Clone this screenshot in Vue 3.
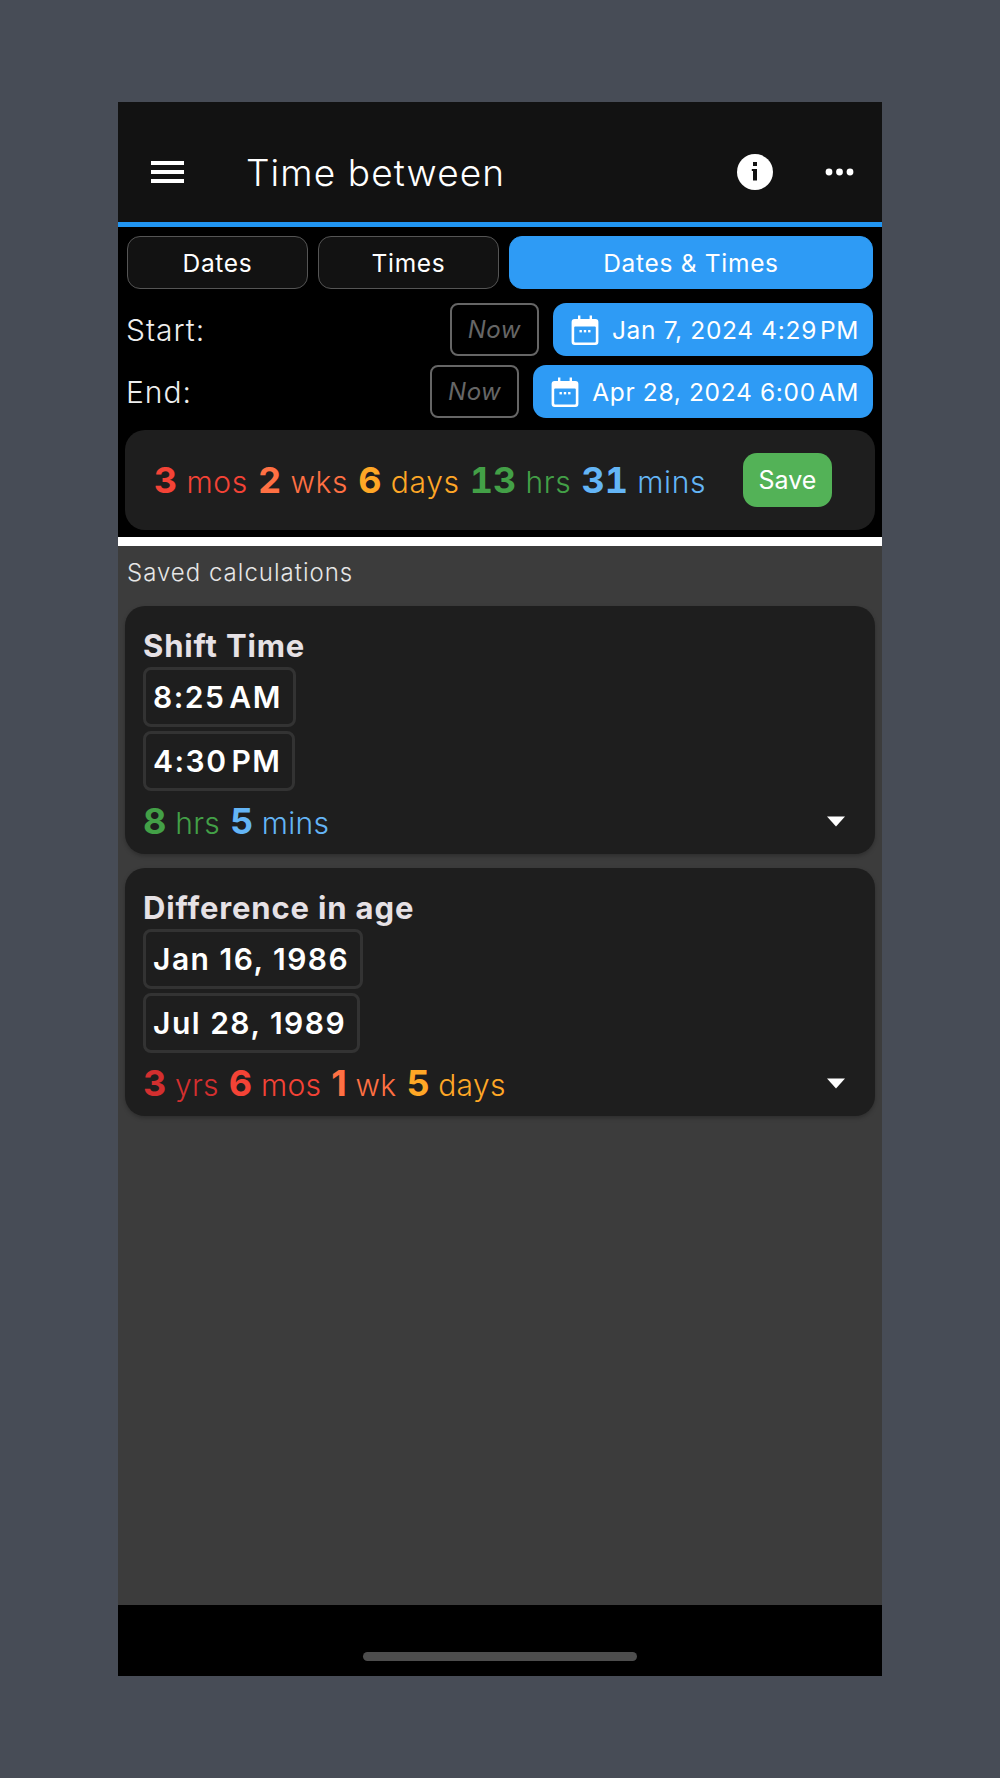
<script setup>
const tabs = [
  { label: 'Dates', wide: false },
  { label: 'Times', wide: false },
  { label: 'Dates & Times', wide: true }
]

const pickers = [
  { label: 'Start:', value: 'Jan 7, 2024 4:29\u200aPM' },
  { label: 'End:', value: 'Apr 28, 2024 6:00\u200aAM' }
]

const result = [
  { n: '3', unit: 'mos', color: '#f44336' },
  { n: '2', unit: 'wks', color: '#ff7043' },
  { n: '6', unit: 'days', color: '#ffa726' },
  { n: '13', unit: 'hrs', color: '#43a047' },
  { n: '31', unit: 'mins', color: '#64b5f6' }
]

const saved = [
  {
    title: 'Shift Time',
    chips: ['8:25\u200aAM', '4:30\u200aPM'],
    parts: [
      { n: '8', unit: 'hrs', color: '#43a047' },
      { n: '5', unit: 'mins', color: '#64b5f6' }
    ]
  },
  {
    title: 'Difference in age',
    chips: ['Jan 16, 1986', 'Jul 28, 1989'],
    parts: [
      { n: '3', unit: 'yrs', color: '#d32f2f' },
      { n: '6', unit: 'mos', color: '#f44336' },
      { n: '1', unit: 'wk', color: '#ff7043' },
      { n: '5', unit: 'days', color: '#ffa726' }
    ]
  }
]
</script>

<template>
  <div class="phone">
    <header class="appbar">
      <svg class="menu" width="33" height="22" viewBox="0 0 33 22">
        <rect x="0" y="0" width="33" height="4" fill="#fff" />
        <rect x="0" y="9" width="33" height="4" fill="#fff" />
        <rect x="0" y="18" width="33" height="4" fill="#fff" />
      </svg>
      <h1 class="title">Time between</h1>
      <svg class="info" width="36" height="36" viewBox="0 0 36 36">
        <circle cx="18" cy="18" r="18" fill="#fff" />
        <rect x="16" y="8" width="4" height="4" fill="#121212" />
        <path d="M14.8 15H20v11.5h-4V17h-1.2z" fill="#121212" />
      </svg>
      <svg class="more" width="29" height="8" viewBox="0 0 29 8">
        <circle cx="4" cy="4" r="3.4" fill="#fff" />
        <circle cx="14.5" cy="4" r="3.4" fill="#fff" />
        <circle cx="25" cy="4" r="3.4" fill="#fff" />
      </svg>
    </header>

    <section class="calc">
      <div class="tabs">
        <button
          v-for="tab in tabs"
          :key="tab.label"
          class="tab"
          :class="{ active: tab.wide }"
        >{{ tab.label }}</button>
      </div>

      <div v-for="p in pickers" :key="p.label" class="picker">
        <span class="picker-label">{{ p.label }}</span>
        <button class="now">Now</button>
        <button class="date">
          <svg width="28" height="30" viewBox="0 0 28 30">
            <path d="M7 0.5h2.4V4h9.2V0.5H21V4h3.4A3 3 0 0 1 27.4 7v20a3 3 0 0 1-3 3H3.6a3 3 0 0 1-3-3V7a3 3 0 0 1 3-3H7z" fill="#fff" />
            <rect x="3.2" y="11.5" width="21.6" height="16" rx="1" fill="#2e9bf5" />
            <rect x="8.5" y="15" width="2.4" height="2.4" fill="#fff" />
            <rect x="12.8" y="15" width="2.4" height="2.4" fill="#fff" />
            <rect x="17.1" y="15" width="2.4" height="2.4" fill="#fff" />
          </svg>
          <span>{{ p.value }}</span>
        </button>
      </div>

      <div class="result">
        <div class="parts">
          <span v-for="r in result" :key="r.unit" class="part" :style="{ color: r.color }">
            <b>{{ r.n }}</b> {{ r.unit }}
          </span>
        </div>
        <button class="save">Save</button>
      </div>
    </section>

    <div class="divider"></div>

    <main class="saved">
      <div class="saved-title">Saved calculations</div>
      <article v-for="s in saved" :key="s.title" class="card">
        <h2 class="card-title">{{ s.title }}</h2>
        <div v-for="c in s.chips" :key="c" class="chip">{{ c }}</div>
        <div class="card-foot">
          <div class="parts">
            <span v-for="r in s.parts" :key="r.unit" class="part" :style="{ color: r.color }">
              <b>{{ r.n }}</b> {{ r.unit }}
            </span>
          </div>
          <svg class="caret" width="20" height="11" viewBox="0 0 20 11">
            <path d="M1 0.5h18L10 10.5z" fill="#fff" />
          </svg>
        </div>
      </article>
    </main>

    <footer class="homebar"><div class="indicator"></div></footer>
  </div>
</template>

<style>
html, body { background: #474c56; }
</style>

<style scoped>
.phone {
  width: 764px;
  height: 1574px;
  margin: 102px auto;
  display: flex;
  flex-direction: column;
  font-family: Inter, "Liberation Sans", sans-serif;
  color: #fff;
  background: #000;
}
.appbar {
  height: 120px;
  padding-top: 20px;
  box-sizing: border-box;
  background: #121212;
  display: flex;
  align-items: center;
  flex: none;
}
.menu { margin-left: 33px; }
.title {
  margin: 0 0 0 62px;
  font-size: 37px;
  font-weight: 300;
  letter-spacing: 1.1px;
  flex: 1;
}
.info { margin-right: 52px; }
.more { margin-right: 28px; }

.calc {
  border-top: 5px solid #2196f3;
  padding: 9px 9px 7px 8px;
  background: #000;
  flex: none;
}
.tabs { display: flex; gap: 10px; margin-left: 1px; }
.tab {
  width: 181px;
  height: 53px;
  box-sizing: border-box;
  border: 1.5px solid #555;
  border-radius: 13px;
  background: #121212;
  color: #fff;
  font: 400 24.5px Inter, sans-serif;
  letter-spacing: 0.7px;
}
.tab.active {
  flex: 1;
  background: #2e9bf5;
  border-color: #2e9bf5;
}
.picker {
  display: flex;
  align-items: center;
  margin-top: 14px;
}
.picker + .picker { margin-top: 9px; }
.picker-label {
  flex: 1;
  font-size: 30px;
  font-weight: 300;
  letter-spacing: 1px;
  color: #eee;
}
.now {
  width: 89px;
  height: 53px;
  box-sizing: border-box;
  border: 2px solid #666;
  border-radius: 8px;
  background: #000;
  color: #666;
  font: italic 400 24px Inter, sans-serif;
  letter-spacing: 0.5px;
}
.date {
  height: 53px;
  margin-left: 14px;
  padding: 0 14px 0 18px;
  display: flex;
  align-items: center;
  gap: 13px;
  border: none;
  border-radius: 13px;
  background: #2e9bf5;
  color: #fff;
  font: 400 24.5px Inter, sans-serif;
  letter-spacing: 0.66px;
}
.result {
  margin: 12px -2px 0 -1px;
  height: 100px;
  padding: 0 43px 0 29px;
  display: flex;
  align-items: center;
  justify-content: space-between;
  border-radius: 20px;
  background: #1e1e1e;
}
.parts { display: flex; gap: 10px; align-items: baseline; }
.part { font-size: 30px; font-weight: 300; white-space: pre; letter-spacing: 0.3px; }
.part b { font-size: 36px; font-weight: 700; letter-spacing: 0; }
.result .part { letter-spacing: 0.7px; }
.result .part b { letter-spacing: 0; font-variant-numeric: tabular-nums; }
.save {
  width: 89px;
  height: 54px;
  border: none;
  border-radius: 14px;
  background: #53b257;
  color: #fff;
  font: 400 25px Inter, sans-serif;
}
.divider { height: 9px; background: #fff; flex: none; }

.saved {
  flex: 1;
  background: #3c3c3c;
  padding: 12px 7px 0 7px;
}
.saved-title {
  margin-left: 2px;
  font-size: 24px;
  font-weight: 300;
  letter-spacing: 1px;
  color: #e6e6e6;
}
.card {
  margin-top: 19px;
  height: 248px;
  box-sizing: border-box;
  padding: 23px 17px 0 18px;
  border-radius: 20px;
  background: #1e1e1e;
  box-shadow: 0 2px 4px rgba(0, 0, 0, 0.25);
}
.card + .card { margin-top: 14px; }
.card-title {
  margin: 0 0 4px;
  font-size: 31px;
  line-height: 34px;
  font-weight: 700;
  letter-spacing: 0.85px;
  color: #e6e1e5;
}
.chip {
  display: table;
  height: 60px;
  box-sizing: border-box;
  margin-bottom: 4px;
  padding: 0 11px 0 7px;
  border: 3px solid #333;
  border-radius: 8px;
  font-size: 30px;
  font-weight: 600;
  line-height: 54px;
  letter-spacing: 1.5px;
}
.card-foot {
  margin-top: 8px;
  display: flex;
  align-items: center;
  justify-content: space-between;
}
.caret { margin-right: 12px; }
.homebar {
  height: 71px;
  flex: none;
  background: #000;
  display: flex;
  justify-content: center;
}
.indicator {
  width: 274px;
  height: 9px;
  margin-top: 47px;
  border-radius: 5px;
  background: #4d4d4d;
}
</style>
